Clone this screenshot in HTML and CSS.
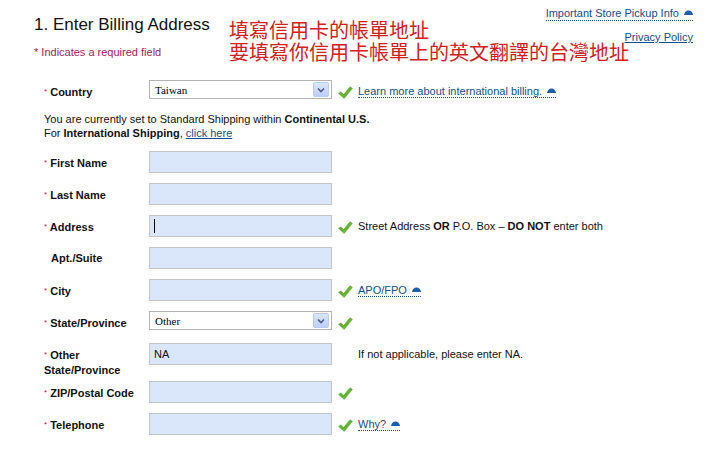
FILE: index.html
```html
<!DOCTYPE html>
<html lang="en">

<head>
    <meta charset="UTF-8">
    <meta name="viewport" content="width=device-width, initial-scale=1.0">
    <title>Enter Billing Address</title>
    <link rel="stylesheet" href="styles.css">
</head>

<body>
    <div class="page">
        <div class="head">
            <div class="head-main">
                <h1 class="title">1. Enter Billing Address</h1>
                <p class="req-note">* Indicates a required field</p>
            </div>
            <div class="head-note">填寫信用卡的帳單地址<br>要填寫你信用卡帳單上的英文翻譯的台灣地址</div>
            <div class="head-links">
                <a class="info-link" href="#">Important Store Pickup Info <svg class="up-icon" viewBox="0 0 9 5" width="9" height="5"><path d="M0 5 C0.5 2 2 0.5 4.5 0.5 C7 0.5 8.5 2 9 5 Z" /></svg></a>
                <a class="plain-link" href="#">Privacy Policy</a>
            </div>
        </div>

        <form class="billing">
            <div class="row">
                <label class="field-label"><span class="req">*</span> Country</label>
                <div class="select-box">
                    <span class="select-text">Taiwan</span>
                    <span class="select-btn"><svg viewBox="0 0 8 6" width="8" height="6"><path d="M1 1.5 L4 4.5 L7 1.5" /></svg></span>
                </div>
                <span class="check"><svg viewBox="0 0 16 14" width="16" height="14"><path d="M0.5 8 L3.2 6.2 L6 9.2 L12.8 0.8 L15.5 2.4 L6.6 13.4 Z" /></svg></span>
                <div class="field-note"><a class="info-link" href="#">Learn more about international billing. <svg class="up-icon" viewBox="0 0 9 5" width="9" height="5"><path d="M0 5 C0.5 2 2 0.5 4.5 0.5 C7 0.5 8.5 2 9 5 Z" /></svg></a></div>
            </div>

            <p class="ship-note">You are currently set to Standard Shipping within <b>Continental U.S.</b><br>For <b>International Shipping</b>, <a class="plain-link" href="#">click here</a></p>

            <div class="row">
                <label class="field-label" for="first"><span class="req">*</span> First Name</label>
                <input class="text-input" type="text" id="first">
            </div>
            <div class="row">
                <label class="field-label" for="last"><span class="req">*</span> Last Name</label>
                <input class="text-input" type="text" id="last">
            </div>
            <div class="row">
                <label class="field-label" for="address"><span class="req">*</span> Address</label>
                <span class="caret-wrap"><input class="text-input" type="text" id="address"></span>
                <span class="check"><svg viewBox="0 0 16 14" width="16" height="14"><path d="M0.5 8 L3.2 6.2 L6 9.2 L12.8 0.8 L15.5 2.4 L6.6 13.4 Z" /></svg></span>
                <div class="field-note">Street Address <b>OR</b> P.O. Box &ndash; <b>DO NOT</b> enter both</div>
            </div>
            <div class="row">
                <label class="field-label no-req" for="apt">Apt./Suite</label>
                <input class="text-input" type="text" id="apt">
            </div>
            <div class="row">
                <label class="field-label" for="city"><span class="req">*</span> City</label>
                <input class="text-input" type="text" id="city">
                <span class="check"><svg viewBox="0 0 16 14" width="16" height="14"><path d="M0.5 8 L3.2 6.2 L6 9.2 L12.8 0.8 L15.5 2.4 L6.6 13.4 Z" /></svg></span>
                <div class="field-note"><a class="info-link" href="#">APO/FPO <svg class="up-icon" viewBox="0 0 9 5" width="9" height="5"><path d="M0 5 C0.5 2 2 0.5 4.5 0.5 C7 0.5 8.5 2 9 5 Z" /></svg></a></div>
            </div>
            <div class="row">
                <label class="field-label"><span class="req">*</span> State/Province</label>
                <div class="select-box">
                    <span class="select-text">Other</span>
                    <span class="select-btn"><svg viewBox="0 0 8 6" width="8" height="6"><path d="M1 1.5 L4 4.5 L7 1.5" /></svg></span>
                </div>
                <span class="check"><svg viewBox="0 0 16 14" width="16" height="14"><path d="M0.5 8 L3.2 6.2 L6 9.2 L12.8 0.8 L15.5 2.4 L6.6 13.4 Z" /></svg></span>
            </div>
            <div class="row row-tall">
                <label class="field-label" for="other"><span class="req">*</span> Other State/Province</label>
                <input class="text-input" type="text" id="other" value="NA">
                <span class="check"></span>
                <div class="field-note">If not applicable, please enter NA.</div>
            </div>
            <div class="row">
                <label class="field-label" for="zip"><span class="req">*</span> ZIP/Postal Code</label>
                <input class="text-input" type="text" id="zip">
                <span class="check"><svg viewBox="0 0 16 14" width="16" height="14"><path d="M0.5 8 L3.2 6.2 L6 9.2 L12.8 0.8 L15.5 2.4 L6.6 13.4 Z" /></svg></span>
            </div>
            <div class="row">
                <label class="field-label" for="phone"><span class="req">*</span> Telephone</label>
                <input class="text-input" type="text" id="phone">
                <span class="check"><svg viewBox="0 0 16 14" width="16" height="14"><path d="M0.5 8 L3.2 6.2 L6 9.2 L12.8 0.8 L15.5 2.4 L6.6 13.4 Z" /></svg></span>
                <div class="field-note"><a class="info-link" href="#">Why? <svg class="up-icon" viewBox="0 0 9 5" width="9" height="5"><path d="M0 5 C0.5 2 2 0.5 4.5 0.5 C7 0.5 8.5 2 9 5 Z" /></svg></a></div>
            </div>
        </form>
    </div>
</body>

</html>
```

FILE: styles.css
```css
body {
    margin: 0;
    background-color: #fff;
    color: #111;
    font-family: "Liberation Sans", Arial, sans-serif;
    font-size: 11px;
}

.page {
    padding-left: 34px;
}

/* note and links share the second column, the links sit at its right edge */
.head {
    display: grid;
    grid-template-columns: 195px 1fr;
    align-items: start;
}

.head-main {
    grid-column: 1;
    grid-row: 1;
    white-space: nowrap;
}

.title {
    margin: 15px 0 0;
    font-size: 17px;
    line-height: 20px;
    font-weight: normal;
    color: #111;
}

.req-note {
    margin: 10px 0 0;
    line-height: 14px;
    color: #a0195e;
}

.head-note {
    grid-column: 2;
    grid-row: 1;
    margin: 19px 0 0;
    white-space: nowrap;
    font-family: "Noto Sans CJK TC", "Noto Sans CJK SC", sans-serif;
    font-size: 20px;
    line-height: 22px;
    color: #d2201c;
}

.head-links {
    grid-column: 2;
    grid-row: 1;
    justify-self: end;
    padding: 6px 20px 0 0;
    display: flex;
    flex-direction: column;
    align-items: flex-end;
    gap: 9px;
    white-space: nowrap;
}

.info-link {
    color: #144e8a;
    text-decoration: none;
    border-bottom: 1px dotted #144e8a;
    line-height: 14px;
}

.plain-link {
    color: #144e8a;
    line-height: 14px;
}

.up-icon {
    fill: #1b5ea9;
    vertical-align: 2px;
    margin-left: 2px;
}

.billing {
    margin: 17px 0 0;
    padding-left: 10px;
}

.row {
    display: grid;
    grid-template-columns: 105px 183px 26px auto;
    align-items: start;
    min-height: 22px;
    margin-bottom: 10px;
}

.row-tall {
    margin-bottom: 3px;
}

.field-label {
    padding-top: 4px;
    line-height: 15px;
    font-weight: bold;
    color: #111;
}

.no-req {
    padding-left: 7px;
}

.req {
    font-size: 8px;
    font-weight: normal;
    color: #c0154f;
    vertical-align: 2px;
}

.text-input {
    display: block;
    box-sizing: border-box;
    width: 183px;
    height: 22px;
    margin: 0;
    padding: 0 4px;
    border: 1px solid #c4c4c4;
    background-color: #dae7fb;
    font-family: "Liberation Sans", Arial, sans-serif;
    font-size: 11px;
    color: #111;
    outline: none;
}

.caret-wrap {
    position: relative;
}

.caret-wrap::after {
    content: "";
    position: absolute;
    left: 5px;
    top: 4px;
    width: 1px;
    height: 14px;
    background-color: #000;
}

.select-box {
    box-sizing: border-box;
    width: 183px;
    height: 19px;
    display: flex;
    align-items: center;
    padding: 0 2px 0 5px;
    border: 1px solid #b3b3b3;
    background-color: #fff;
}

.select-text {
    font-family: "Liberation Serif", "Times New Roman", serif;
    font-size: 11px;
    color: #000;
}

.select-btn {
    margin-left: auto;
    box-sizing: border-box;
    width: 16px;
    height: 15px;
    display: flex;
    align-items: center;
    justify-content: center;
    border: 1px solid #b9cbf3;
    border-radius: 2px;
    background: linear-gradient(#dde7fd, #bccff8);
}

.select-btn svg {
    fill: none;
    stroke: #4a5d86;
    stroke-width: 1.6;
}

.check {
    padding: 6px 0 0 6px;
}

.check svg {
    display: block;
    width: 15px;
    height: 13px;
    fill: #64b52f;
    stroke: #4c9a22;
    stroke-width: 0.5;
}

.field-note {
    padding-top: 4px;
    line-height: 14px;
    color: #111;
    white-space: nowrap;
}

.ship-note {
    margin: 0 0 11px;
    line-height: 14px;
    color: #111;
}
```
